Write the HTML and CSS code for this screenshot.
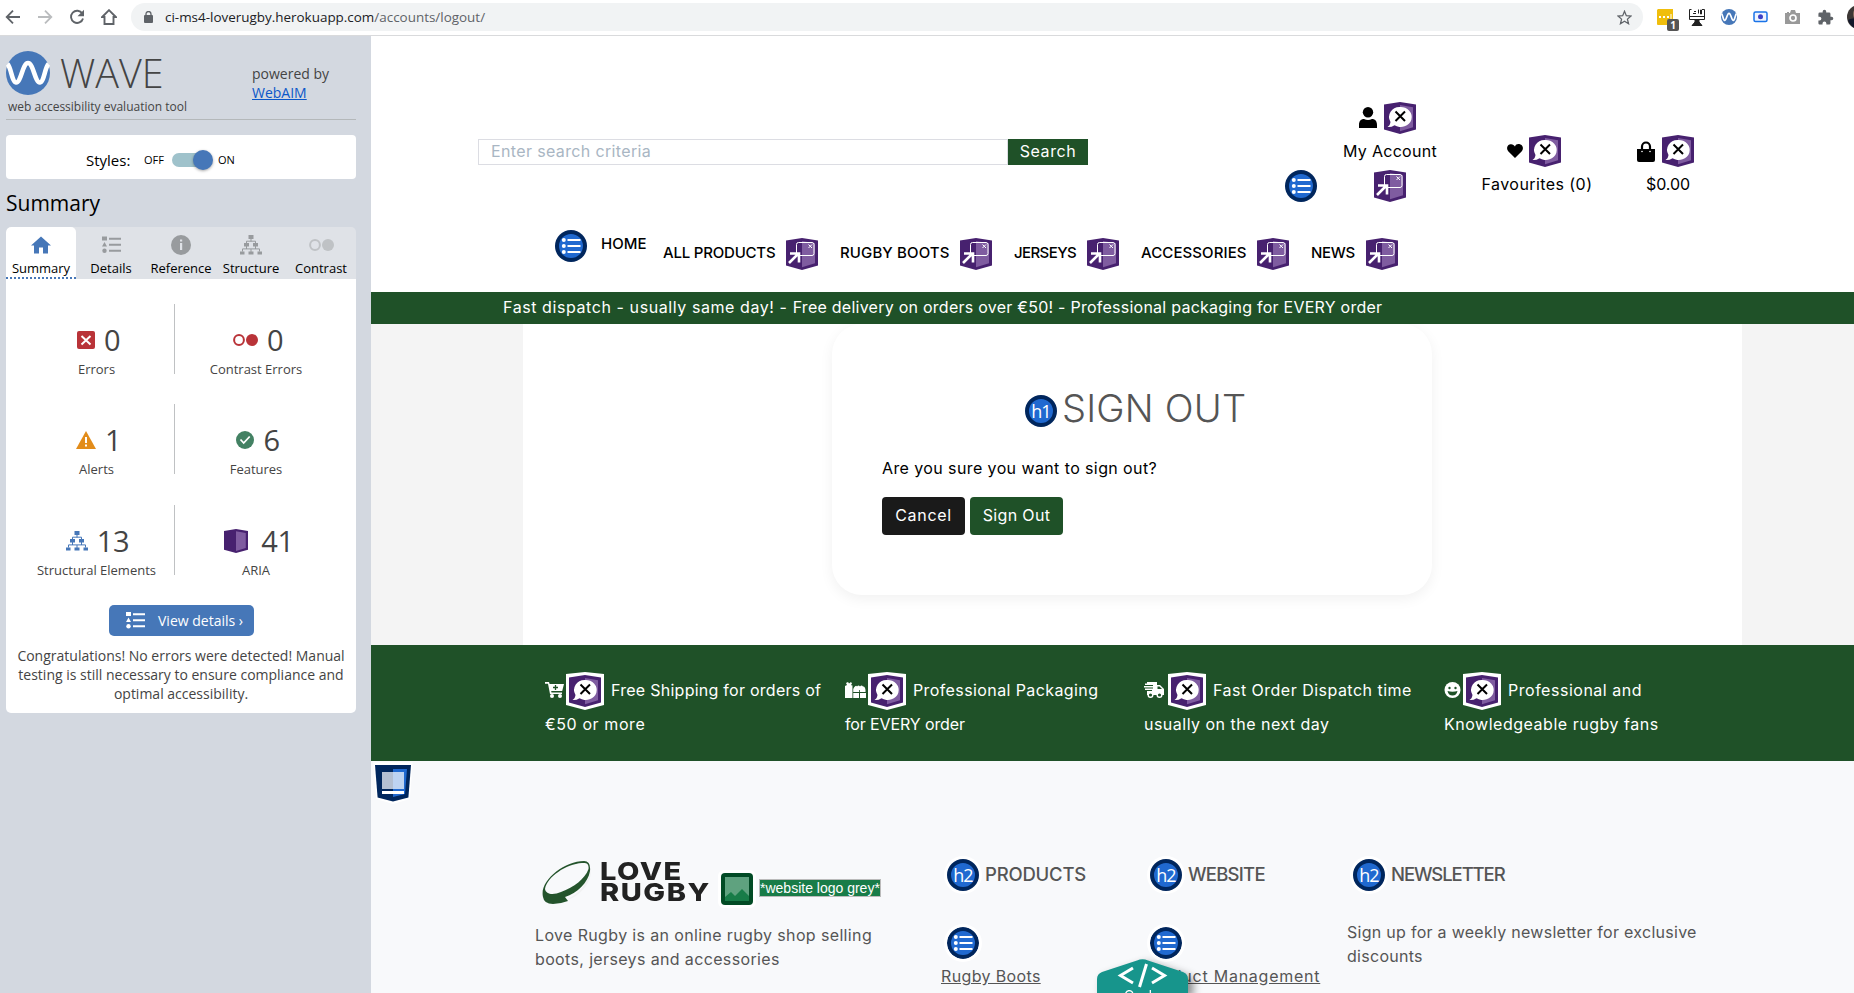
FILE: index.html
```html
<!DOCTYPE html>
<html lang="en">
<head>
<meta charset="utf-8">
<title>Sign Out - Love Rugby</title>
<link rel="stylesheet" href="styles.css">
</head>
<body>
<svg class="sprite" aria-hidden="true">
  <symbol id="aria-base" viewBox="0 0 32 32"><path fill="#47216f" d="M0 2.500L16 0l16 2.500v25L16 32 0 27.500z"/><path fill="#7f5ca0" d="M16 3l13 2.300v20L16 29.300z"/></symbol>
  <symbol id="aria-label" viewBox="0 0 32 32"><use href="#aria-base"/><path fill="#fff" d="M16 5a11 10 0 1 1-5.500 18.200Q7 25.500 3.500 25c2-1.200 2.600-2.600 3-5A10.500 10 0 0 1 16 5z"/><path stroke="#000" stroke-width="2" d="M11.500 9.500l9.500 9.500M21 9.500L11.500 19"/></symbol>
  <symbol id="aria-popup" viewBox="0 0 32 32"><use href="#aria-base"/><rect x="10.500" y="4.500" width="17.500" height="13" rx="2" fill="none" stroke="#fff"/><path stroke="#fff" d="M22.500 6.500l3.500 3.500M26 6.500l-3.500 3.500"/><path fill="none" stroke="#fff" stroke-width="2.600" d="M3 25L12.500 15.500M4 15.500h9v9"/></symbol>
  <symbol id="list-badge" viewBox="0 0 32 32"><circle cx="16" cy="16" r="16" fill="#00265d"/><circle cx="16" cy="16" r="12" fill="#2069d0"/><path stroke="#fff" stroke-width="2.200" d="M12.500 10h13M12.500 16h13M12.500 22h13"/><g fill="#fff"><circle cx="8.800" cy="10" r="2"/><circle cx="8.800" cy="16" r="2"/><circle cx="8.800" cy="22" r="2"/></g></symbol>
  <symbol id="structure" viewBox="0 0 22 20"><path d="M8.500 0h5v4h-5zM4 8h5v3.500H4zM13 8h5v3.500h-5zM0 16.500h4.500v3H0zM8.500 16.500h5v3h-5zM17.500 16.500H22v3h-4.500z" fill="currentColor"/><path fill="none" stroke="currentColor" d="M11 4v2.500M6.500 8V6.200h9V8M6.500 11v3M15.500 11v3M2.500 16.500v-2.600h17v2.600M11 14v3"/></symbol>
  <symbol id="details" viewBox="0 0 19 17"><path fill="currentColor" d="M0 0h5v4H0zM2.500 5.500L5 10H0zM7 1.300h12v1.900H7zM7 7.300h12v1.900H7zM7 13.300h12v1.900H7z"/><circle cx="2.500" cy="14.200" r="2.200" fill="currentColor"/></symbol>
  <symbol id="contrast" viewBox="0 0 25 12"><circle cx="6" cy="6" r="4.900" fill="none" stroke="currentColor" stroke-width="2"/><circle cx="19" cy="6" r="6" fill="currentColor"/></symbol>
  <symbol id="wave" viewBox="0 0 44 44"><circle cx="22" cy="22" r="22" fill="#4677b8"/><path fill="none" stroke="#fff" stroke-width="4.600" d="M1.500 13c3.500 3 4.500 18 8.500 18.500C15 32 16.500 12 22 12s7 20 12 19.500c4-.5 5-15.500 8.500-18.500"/></symbol>
</svg>

<header class="chrome">
  <nav class="chrome-nav">
    <svg width="16" height="16" viewBox="0 0 16 16" fill="none" stroke="#5f6368" stroke-width="1.800"><path d="M15 8H2M8 1.700L1.700 8 8 14.300"/></svg>
    <svg width="16" height="16" viewBox="0 0 16 16" fill="none" stroke="#babcbe" stroke-width="1.800"><path d="M1 8h13M8 1.700L14.300 8 8 14.300"/></svg>
    <svg width="16" height="16" viewBox="0 0 16 16"><path fill="none" stroke="#5f6368" stroke-width="1.900" d="M13.300 4.600A6.100 6.100 0 1 0 14 9.400"/><path fill="#5f6368" d="M15 .8v6.500H8.500z"/></svg>
    <svg width="16" height="16" viewBox="0 0 16 16" fill="none" stroke="#5f6368" stroke-width="1.900"><path d="M8 1.200L1.200 8H3.500v7h9V8h2.300z"/></svg>
  </nav>
  <div class="omnibox">
    <svg width="9" height="12" viewBox="0 0 9 12"><rect y="4" width="9" height="8" rx="1" fill="#5f6368"/><path fill="none" stroke="#5f6368" stroke-width="1.300" d="M2 5V3a2.500 2.500 0 0 1 5 0v2"/></svg>
    <span class="url"><b>ci-ms4-loverugby.herokuapp.com</b>/accounts/logout/</span>
    <svg class="star" width="15" height="15" viewBox="0 0 24 24" fill="none" stroke="#5f6368" stroke-width="2"><path d="M12 2l2.900 7.100 7.500.6-5.700 4.900 1.800 7.400-6.500-4-6.500 4 1.800-7.400-5.700-4.900 7.500-.6z"/></svg>
  </div>
  <div class="extensions">
    <span class="ext-notes"><svg width="16" height="16" viewBox="0 0 16 16"><path fill="#f0be0c" d="M1 0h15v16H1a1 1 0 0 1-1-1V1z"/><path fill="#fff" d="M2 7h2v2H2zM6 7h2v2H6zM10 7h2v2h-2zM13.500 5h1v5h-1z"/></svg><i>1</i></span>
    <svg width="16" height="17" viewBox="0 0 16 17" fill="none" stroke="#222"><path d="M2.500.5h-2v10h15V.5H13M0 7.500h16M4 4.500h3M5 2.500h2M9.500.5v4M11.500 1v4h1V1z"/><path fill="#222" d="M6 11h4v2l3 3.500H3L6 13z"/></svg>
    <svg width="16" height="16"><use href="#wave"/></svg>
    <svg width="16" height="12" viewBox="0 0 16 12"><rect x="1" y="1" width="13" height="9.500" rx="1.500" fill="#eef4ff" stroke="#1a73e8" stroke-width="1.500"/><circle cx="7.500" cy="5.800" r="2.500" fill="#3c40c6"/></svg>
    <svg width="16" height="14" viewBox="0 0 16 14"><path fill="#999" d="M0 3h2V2h2v1h1l1-3h4l1 3h4v11H0z"/><circle cx="8" cy="8" r="3" fill="#999" stroke="#fff" stroke-width="1.700"/></svg>
    <svg width="17" height="17" viewBox="0 0 24 24"><path fill="#5f6368" d="M20.500 11H19V7a2 2 0 0 0-2-2h-4V3.500a2.500 2.500 0 0 0-5 0V5H4a2 2 0 0 0-2 2v3.800h1.500a2.700 2.700 0 0 1 0 5.400H2V20c0 1.100.9 2 2 2h3.800v-1.500a2.700 2.700 0 0 1 5.400 0V22H17a2 2 0 0 0 2-2v-4h1.500a2.500 2.500 0 0 0 0-5z"/></svg>
    <svg class="avatar" width="24" height="24" viewBox="0 0 24 24"><circle cx="12" cy="12" r="12" fill="#3c3735"/><path fill="#12182b" d="M1 15q4-3 11 0v9A12 12 0 0 1 1 15z"/><ellipse cx="9" cy="9" rx="3" ry="5" fill="#8b6f60"/></svg>
  </div>
</header>

<div class="page">
<aside class="wave-panel">
  <div class="wave-head">
    <div>
      <div class="wave-brand"><svg width="44" height="44"><use href="#wave"/></svg><span>WAVE</span></div>
      <div class="wave-tag">web accessibility evaluation tool</div>
    </div>
    <div class="powered">powered by<br><a>WebAIM</a></div>
  </div>
  <div class="styles-box"><span class="styles-name">Styles:</span><small>OFF</small><span class="toggle"><i></i></span><small>ON</small></div>
  <h2 class="wave-title">Summary</h2>
  <div class="tabs">
    <div class="tab active"><svg width="20" height="17" viewBox="0 0 20 17"><path fill="#4677b8" d="M10 0l10 9h-3v8h-5v-6H8v6H3V9H0z"/></svg><span>Summary</span></div>
    <div class="tab"><svg width="19" height="17"><use href="#details"/></svg><span>Details</span></div>
    <div class="tab"><svg width="20" height="20" viewBox="0 0 20 20"><circle cx="10" cy="10" r="10" fill="currentColor"/><path fill="#dfe2e7" d="M9 4.500h2.200v2H9zM9 8h2.200v7H9z"/></svg><span>Reference</span></div>
    <div class="tab"><svg width="22" height="20"><use href="#structure"/></svg><span>Structure</span></div>
    <div class="tab faded"><svg width="25" height="12"><use href="#contrast"/></svg><span>Contrast</span></div>
  </div>
  <div class="wave-body">
    <div class="stats">
      <div class="stat"><div class="count"><svg width="18" height="18" viewBox="0 0 18 18"><rect width="18" height="18" rx="2" fill="#b93338"/><path stroke="#fff" stroke-width="2" d="M4.500 5l9 8.500M13.500 5l-9 8.500"/></svg>0</div><p>Errors</p></div>
      <div class="stat"><div class="count red"><svg width="25" height="12"><use href="#contrast"/></svg>0</div><p>Contrast Errors</p></div>
      <div class="stat"><div class="count"><svg width="20" height="18" viewBox="0 0 20 18"><path fill="#e28c1a" d="M10 0l10 18H0z"/><path fill="#fff" d="M9 6h2v6H9zM9 13.500h2v2H9z"/></svg>1</div><p>Alerts</p></div>
      <div class="stat"><div class="count"><svg width="18" height="18" viewBox="0 0 18 18"><circle cx="9" cy="9" r="9" fill="#438163"/><path fill="none" stroke="#fff" stroke-width="1.800" d="M4.500 8.500l3.200 3.500 6-6.500"/></svg>6</div><p>Features</p></div>
      <div class="stat last"><div class="count blue"><svg width="22" height="20"><use href="#structure"/></svg>13</div><p>Structural Elements</p></div>
      <div class="stat last"><div class="count aria-count"><svg width="24" height="24" viewBox="0 0 32 32"><use href="#aria-base"/></svg>41</div><p>ARIA</p></div>
    </div>
    <div class="view-details"><svg width="19" height="17"><use href="#details"/></svg>View details ›</div>
    <p class="congrats">Congratulations! No errors were detected! Manual testing is still necessary to ensure compliance and optimal accessibility.</p>
  </div>
</aside>

<main class="site">
  <header class="site-head">
    <div class="head-row">
      <div class="search"><span class="field">Enter search criteria</span><span class="search-btn">Search</span></div>
      <svg class="list-mark" width="32" height="32"><use href="#list-badge"/></svg>
      <div class="tool account">
        <div class="tool-icons"><svg width="18" height="21" viewBox="0 0 18 21"><ellipse cx="9" cy="5.300" rx="5.200" ry="5.300"/><path d="M0 21v-3c0-4 2-6 5-6q4 2 8 0c3 0 5 2 5 6v3z"/></svg><svg width="32" height="32"><use href="#aria-label"/></svg></div>
        <span>My Account</span>
        <svg class="popup-mark" width="32" height="32"><use href="#aria-popup"/></svg>
      </div>
      <div class="tool favourites">
        <div class="tool-icons"><svg width="16" height="14" viewBox="0 0 16 14"><path d="M8 14L1.200 7.300C-.8 5 0 1.500 2.500.5 5-.4 7 .8 8 2.500 9-.0 11-.4 13.500.5 16 1.500 16.800 5 14.800 7.300z"/></svg><svg width="32" height="32"><use href="#aria-label"/></svg></div>
        <span>Favourites (0)</span>
      </div>
      <div class="tool bag">
        <div class="tool-icons"><svg width="18" height="21" viewBox="0 0 18 21"><path d="M0 8h18v11a2 2 0 0 1-2 2H2a2 2 0 0 1-2-2z"/><path fill="none" stroke="#000" stroke-width="2.200" d="M5 10V5.500a4 4 0 0 1 8 0V10"/><circle cx="5" cy="10.500" r=".8" fill="#fff"/><circle cx="13" cy="10.500" r=".8" fill="#fff"/></svg><svg width="32" height="32"><use href="#aria-label"/></svg></div>
        <span class="price">$0.00</span>
      </div>
    </div>
    <nav class="menu">
      <svg width="32" height="32"><use href="#list-badge"/></svg>
      <span class="home">HOME</span>
      <span class="entry products"><b>ALL PRODUCTS</b><svg width="32" height="32"><use href="#aria-popup"/></svg></span>
      <span class="entry boots"><b>RUGBY BOOTS</b><svg width="32" height="32"><use href="#aria-popup"/></svg></span>
      <span class="entry jerseys"><b>JERSEYS</b><svg width="32" height="32"><use href="#aria-popup"/></svg></span>
      <span class="entry accessories"><b>ACCESSORIES</b><svg width="32" height="32"><use href="#aria-popup"/></svg></span>
      <span class="entry news"><b>NEWS</b><svg width="32" height="32"><use href="#aria-popup"/></svg></span>
    </nav>
  </header>
  <div class="banner"><span class="lead">Fast dispatch - usually same day! - </span>Free delivery on orders over €50! - Professional packaging for EVERY order</div>
  <section class="stage">
    <div class="container">
      <div class="card">
        <div class="card-title"><span class="h-badge">h1</span><h1>SIGN OUT</h1></div>
        <p>Are you sure you want to sign out?</p>
        <div class="buttons"><span class="btn dark">Cancel</span><span class="btn">Sign Out</span></div>
      </div>
    </div>
  </section>
  <section class="perks">
    <div class="perk"><div class="perk-row"><svg width="19" height="16" viewBox="0 0 19 16"><path fill="#fff" d="M0 0h4l.6 2H19l-1.800 7H6.200l.3 1.500H17V12H5L3 1.800H0z"/><circle cx="7" cy="14" r="2" fill="#fff"/><circle cx="15" cy="14" r="2" fill="#fff"/><path stroke="#1f5128" stroke-width="1.300" d="M10.500 3v5M8 5.500h5"/></svg><span class="outlined"><svg width="32" height="32"><use href="#aria-label"/></svg></span>Free Shipping for orders of</div>€50 or more</div>
    <div class="perk pack"><div class="perk-row"><svg width="21" height="16" viewBox="0 0 21 16"><path fill="#fff" d="M0 4l2-1-1-2 2-1 1 1.500L6 0l1 1.500L6 3l2 1v12H0zM9 5.500q2-3 3-1 1.500-2 3 0 1.500-2 3 0 2-.5 2.500 3.500v2H8V7z"/><path fill="#fff" d="M8 11h6v5H8zM15 11h6v5h-6z"/><path stroke="#1f5128" stroke-width=".8" d="M7.800 4v12M8 10.500h13M14.500 8v8"/></svg><span class="outlined"><svg width="32" height="32"><use href="#aria-label"/></svg></span>Professional Packaging</div><span class="tight">for EVERY order</span></div>
    <div class="perk fast"><div class="perk-row"><svg width="21" height="16" viewBox="0 0 21 16"><path fill="#fff" d="M3 0h10v3h3l4 4v6H3V9h5V8H1V6.500h8v-1H0V4h9V3H1V1.500h2z"/><path fill="#1f5128" d="M13.500 4.500h2L18 7h-4.500z"/><circle cx="6.500" cy="13" r="2.300" fill="#1f5128" stroke="#fff" stroke-width="1.400"/><circle cx="15.500" cy="13" r="2.300" fill="#1f5128" stroke="#fff" stroke-width="1.400"/></svg><span class="outlined"><svg width="32" height="32"><use href="#aria-label"/></svg></span>Fast Order Dispatch time</div>usually on the next day</div>
    <div class="perk smile"><div class="perk-row"><svg width="17" height="16" viewBox="0 0 17 16"><circle cx="8.500" cy="8" r="8" fill="#fff"/><circle cx="5.500" cy="6" r="1.200" fill="#1f5128"/><circle cx="11.500" cy="6" r="1.200" fill="#1f5128"/><path fill="#1f5128" d="M3.500 9q5 1.600 10 0-1 4.500-5 4.500T3.500 9z"/></svg><span class="outlined"><svg width="32" height="32"><use href="#aria-label"/></svg></span>Professional and</div>Knowledgeable rugby fans</div>
  </section>
  <footer class="foot">
    <div class="region-col"><svg width="42" height="43" viewBox="-3 -3 42 43"><path fill="#fff" stroke="#fff" stroke-width="5" d="M1 0h34l-2.500 32L18 36.500 3.500 32z"/><path fill="#00265d" d="M0 0h36l-2.600 32.500L18 36.500 2.600 32.500z"/><path fill="#2069d0" d="M18 4h14l-2 25-12 3z"/><path fill="#b3bfd2" d="M7 7h11v17H7z"/><path fill="#bdd3f2" d="M18 7h11v17H18z"/><path fill="#fff" d="M7 26h22v3H7z"/></svg></div>
    <div class="about">
      <div class="logo-row">
        <svg class="ball" width="51" height="45" viewBox="0 0 51 45"><path fill="#f1f2f3" d="M22 41C36 35 46 24 48 9c4 11-10 29-26 32z"/><path fill="#24542c" fill-rule="evenodd" d="M1 37C-3 21 22 1 42 1q7 0 6 10C46 23 35 33 23 37l3 4q-8 3-15 3-9 0-10-7zm2-8c1 6 9 6 16 3C32 27 43 19 46.500 9 47 4 45 2.500 40 3 24 4 5 17 3 29z"/></svg>
        <div class="wordmark"><span>LOVE</span><span>RUGBY</span></div>
        <svg class="img-mark" width="38" height="38" viewBox="0 0 38 38"><rect width="38" height="38" rx="6" fill="#fff"/><rect x="3" y="3" width="32" height="32" rx="4" fill="#024b25"/><path fill="#5fa27f" d="M7 7h24v24H7z"/><path fill="#187c48" d="M7 27l6-5 4 4 7-7 7 7v5H7z"/></svg>
        <span class="alt-text">*website logo grey*</span>
      </div>
      <p>Love Rugby is an online rugby shop selling<br>boots, jerseys and accessories</p>
    </div>
    <div class="links">
      <div class="foot-title"><span class="h-badge ring">h2</span><h2>PRODUCTS</h2></div>
      <svg class="ring" width="32" height="32"><use href="#list-badge"/></svg>
      <a>Rugby Boots</a>
    </div>
    <div class="links">
      <div class="foot-title website"><span class="h-badge ring">h2</span><h2>WEBSITE</h2></div>
      <svg class="ring" width="32" height="32"><use href="#list-badge"/></svg>
      <a class="manage">Product Management</a>
    </div>
    <div class="letter">
      <div class="foot-title newsletter"><span class="h-badge ring">h2</span><h2>NEWSLETTER</h2></div>
      <p>Sign up for a weekly newsletter for exclusive<br>discounts</p>
    </div>
  </footer>
</main>
</div>

<div class="code-tab"><svg width="91" height="34" viewBox="0 0 91 34"><path fill="#17958c" d="M0 20Q0 15 5 13L40 1.500Q45.500-1 51 1.500L86 13q5 2 5 7v14H0z"/><path fill="none" stroke="#fff" stroke-width="3" d="M36 9L23.500 16.500 36 24M55 9l12.500 7.500L55 24M49.500 5l-7 23"/></svg><span>Code</span></div>
</body>
</html>
```
FILE: styles.css
```css
* { box-sizing: border-box; }
body { margin: 0; height: 993px; overflow: hidden; position: relative; background: #fff; color: #000; font: 16px/24px Inter, sans-serif; letter-spacing: .36px; }
svg { display: block; flex: none; }
.sprite { position: absolute; width: 0; height: 0; }
h1, h2, p { margin: 0; font-weight: 400; }

.chrome { display: flex; align-items: flex-start; height: 36px; border-bottom: 1px solid #d9dadc; overflow: hidden; }
.chrome-nav { display: flex; flex: none; gap: 16px; padding: 9px 0 0 5px; width: 131px; }
.omnibox { display: flex; flex: none; align-items: center; width: 1512px; height: 28px; margin-top: 3px; padding: 0 11px 0 13px; border-radius: 14px; background: #f1f3f4; }
.url { margin-left: 12px; font: 13.450px/20px "Open Sans", sans-serif; letter-spacing: 0; color: #5f6368; }
.url b { font-weight: 400; color: #202124; }
.star { margin-left: auto; }
.extensions { display: flex; flex: none; align-items: center; gap: 16px; height: 34px; margin-left: 14px; }
.ext-notes { position: relative; }
.ext-notes i { position: absolute; left: 10px; top: 10px; width: 12px; height: 12px; border-radius: 2px; background: #555; color: #fff; font: bold 10px/12px "Open Sans", sans-serif; letter-spacing: 0; text-align: center; }
.avatar { margin-left: -3px; }

.page { display: flex; height: 957px; }
.wave-panel { width: 371px; flex: none; padding: 0 15px 0 6px; background: #d3d8e0; font-family: "Open Sans", sans-serif; letter-spacing: 0; }
.wave-head { display: flex; height: 84px; padding-top: 15px; border-bottom: 1px solid #b4b8ba; color: #444; }
.wave-brand { display: flex; height: 44px; font-size: 39.500px; font-weight: 300; line-height: 45px; }
.wave-brand span { margin-left: 10px; }
.wave-tag { width: 180px; margin: 2px 0 0 2px; font-size: 12px; line-height: 20px; white-space: nowrap; }
.powered { margin: 13px 0 0 64px; font-size: 14px; line-height: 19px; }
.powered a { color: #0b57c9; text-decoration: underline; }
.styles-box { display: flex; align-items: center; height: 44px; margin-top: 15px; padding: 5px 0 0 80px; border-radius: 4px; background: #fff; font-size: 15px; }
.styles-name { width: 58px; }
.styles-box small { width: 28px; font-size: 11px; }
.toggle { width: 37px; height: 14px; margin-right: 9px; border-radius: 7px; background: #9fc2cb; }
.toggle i { display: block; width: 20px; height: 20px; margin: -3px 0 0 21px; border-radius: 50%; background: #4677b8; box-shadow: 0 1px 3px rgba(0,0,0,.35); }
.wave-title { height: 39px; margin-top: 9px; font-size: 21px; line-height: 31px; }
.tabs { display: grid; grid-template-columns: repeat(5, 70px); height: 52px; border-radius: 5px 5px 0 0; overflow: hidden; background: #dfe2e7; color: #989b9e; }
.tab { display: flex; flex-direction: column; align-items: center; }
.tab svg { height: 20px; margin-top: 8px; }
.tab span { margin-top: 4px; font-size: 13px; line-height: 19px; color: #000; }
.tab.active { border-radius: 5px 5px 0 0; background: #fff repeating-linear-gradient(90deg, #4677b8 0 2px, #fff 2px 4px) 0 100% / 100% 2px no-repeat; }
.tab.faded { color: #bfc2c5; }
.wave-body { height: 434px; padding-top: 25px; border-radius: 0 0 5px 5px; background: #fff; color: #444; }
.stats { display: grid; grid-template-columns: 169px 162px; grid-template-rows: 70px 70px 71px; row-gap: 30px; }
.stat { padding-top: 16px; text-align: center; }
.stat:nth-child(odd) { padding-left: 13px; border-right: 1px solid #bfc1c3; }
.stat.last { margin-top: 1px; }
.count { display: flex; align-items: center; justify-content: center; gap: 9px; height: 40px; padding-left: 4px; font-size: 29px; line-height: 40px; letter-spacing: -.4px; }
.count.red svg { color: #b93338; }
.count.blue { padding-left: 2px; }
.count.blue svg { color: #4677b8; }
.count.aria-count { gap: 13px; padding-left: 6px; }
.stat p { font-size: 13px; line-height: 18px; white-space: nowrap; }
.view-details { display: flex; align-items: center; gap: 13px; width: 145px; height: 31px; margin: 30px auto 0 103px; padding-left: 17px; border-radius: 5px; background: #4677b8; color: #fff; font-size: 14px; white-space: nowrap; }
.congrats { margin-top: 10px; padding: 0 8px; font-size: 14px; line-height: 19px; text-align: center; }

.site { flex: 1; min-width: 0; }
.site-head { height: 256px; padding-top: 66px; }
.head-row { display: flex; align-items: flex-start; height: 100px; }
.search { display: flex; width: 610px; height: 26px; margin: 37px 0 0 107px; }
.field { width: 530px; padding-left: 12px; border: 1px solid #dcdde3; color: #a9b6c3; line-height: 23px; }
.search-btn { width: 80px; background: #1f5128; color: #fff; line-height: 24px; text-align: center; letter-spacing: .6px; }
.list-mark { margin: 68px 0 0 197px; }
.tool { display: flex; flex-direction: column; align-items: center; white-space: nowrap; }
.tool-icons { display: flex; align-items: center; height: 32px; margin-bottom: 5px; }
.tool-icons svg + svg { margin-left: 7px; }
.account { width: 100px; margin-left: 23px; letter-spacing: .3px; }
.account .tool-icons { margin-right: 5px; }
.account .tool-icons svg:first-child { margin-top: -1px; }
.popup-mark { margin-top: 7px; }
.favourites { width: 120px; margin: 33px 0 0 37px; letter-spacing: .43px; }
.favourites .tool-icons { margin-right: 6px; }
.favourites .tool-icons svg + svg { margin-left: 6px; }
.bag { width: 80px; margin: 33px 0 0 31px; }
.bag .tool-icons { margin-right: 6px; }
.price { letter-spacing: -.1px; }
.menu { display: flex; align-items: flex-start; padding: 28px 0 0 184px; font-size: 15px; font-weight: 500; letter-spacing: .05px; white-space: nowrap; }
.home { width: 62px; margin: 2px 0 0 14px; }
.entry { display: flex; margin-top: 8px; }
.entry b { font-weight: 500; line-height: 29px; }
.products { width: 177px; letter-spacing: -.2px; }
.products b { width: 123px; }
.boots { width: 174px; }
.boots b { width: 120px; letter-spacing: .12px; }
.jerseys { width: 127px; letter-spacing: -.6px; }
.jerseys b { width: 73px; }
.accessories { width: 170px; }
.accessories b { width: 116px; letter-spacing: .1px; }
.news b { width: 55px; letter-spacing: -.3px; }
.banner { height: 32px; padding-left: 132px; background: #1f5128; color: #fff; line-height: 30px; letter-spacing: .25px; white-space: nowrap; }
.lead { letter-spacing: .58px; }
.stage { height: 321px; background: #f4f4f4; }
.container { width: 1219px; height: 321px; margin-left: 152px; background: #fff; overflow: hidden; }
.card { width: 600px; height: 271px; margin-left: 309px; padding: 61px 50px 0; border-radius: 30px; background: #fff; box-shadow: 0 4px 14px rgba(0,0,0,.06); }
.card-title { display: flex; align-items: center; gap: 5px; height: 46px; padding-left: 143px; color: #555; }
.card-title .h-badge { margin-top: 6px; }
.card h1 { font-size: 38px; font-weight: 300; line-height: 46px; letter-spacing: .2px; white-space: nowrap; }
.h-badge { flex: none; width: 32px; height: 32px; border: 4px solid #00265d; border-radius: 50%; background: #2069d0; color: #fff; font: 18px/25px "Open Sans", sans-serif; letter-spacing: -.8px; text-align: center; }
.card p { margin-top: 25px; letter-spacing: .4px; }
.buttons { display: flex; gap: 5px; margin-top: 17px; }
.btn { width: 93px; height: 38px; border-radius: 4px; background: #1f5128; color: #fff; line-height: 36px; text-align: center; }
.btn.dark { width: 83px; background: #1a1a1a; letter-spacing: .7px; }
.perks { display: grid; grid-template-columns: 300px 299px 300px 1fr; height: 116px; padding: 28px 0 0 174px; background: #1f5128; color: #fff; line-height: 34px; white-space: nowrap; }
.perk:first-child { letter-spacing: .6px; }
.perk-row { display: flex; align-items: center; height: 34px; }
.perk:first-child .perk-row { letter-spacing: .26px; }
.outlined { display: flex; width: 38px; height: 38px; margin: 2px 7px 0 2px; padding: 3px; clip-path: polygon(0 2px, 50% 0, 100% 2px, 100% 33px, 50% 38px, 0 33px); background: #fff; }
.pack .perk-row { letter-spacing: .4px; }
.pack .tight { letter-spacing: -.12px; }
.fast { letter-spacing: .48px; }
.fast .outlined { margin-left: 3px; }
.smile { letter-spacing: .52px; }

.foot { display: flex; height: 232px; overflow: hidden; background: #f8f9fb; color: #555; white-space: nowrap; }
.region-col { width: 164px; padding: 1px 0 0 1px; }
.about { width: 406px; padding-top: 98px; }
.logo-row { display: flex; height: 64px; padding-left: 7px; }
.ball { margin-top: 1px; }
.wordmark { display: flex; flex-direction: column; width: 111px; margin: 2px 7px 0 7px; color: #222; font-size: 25px; font-weight: 800; line-height: 21px; letter-spacing: 1.300px; transform: scaleX(1.160); transform-origin: 0 0; }
.img-mark { margin-top: 11px; }
.alt-text { height: 18px; margin: 20px 0 0 3px; border: 1px solid #bbb; background: #187c48; color: #fff; font: 14px/16px "Liberation Sans", sans-serif; letter-spacing: 0; }
.links { width: 203px; padding-top: 98px; }
.letter { padding-top: 98px; }
.foot-title { display: flex; align-items: flex-start; gap: 6px; height: 32px; padding-left: 6px; }
.foot-title h2 { margin-top: 3px; font-size: 18.500px; font-weight: 500; letter-spacing: -.2px; }
.website h2 { letter-spacing: -.75px; }
.newsletter h2 { letter-spacing: -1.100px; }
.ring { border-radius: 50%; box-shadow: 0 0 0 3px #fff; }
.links > svg { margin: 36px 0 5px 6px; }
.links a { text-decoration: underline; }
.manage { letter-spacing: .75px; }
.letter p { margin-top: 29px; letter-spacing: .28px; }

.code-tab { position: absolute; left: 1097px; top: 959px; width: 91px; height: 34px; overflow: hidden; filter: drop-shadow(5px 4px 4px rgba(0,0,0,.45)); }
.code-tab span { position: absolute; left: 0; top: 27px; width: 91px; color: #fff; font-size: 14px; line-height: 20px; text-align: center; }
```
